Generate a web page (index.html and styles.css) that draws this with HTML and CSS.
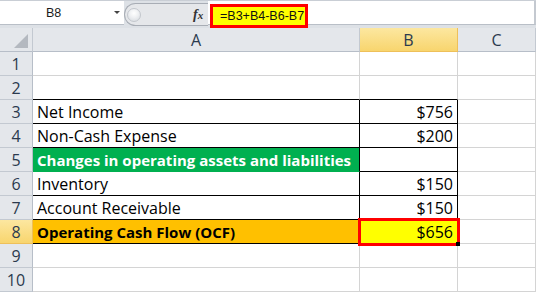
FILE: index.html
```html
<!DOCTYPE html>
<html lang="en">
<head>
  <meta charset="UTF-8">
  <title>Operating Cash Flow</title>
  <link rel="stylesheet" href="styles.css">
</head>
<body>
  <div class="formula-bar">
    <div class="name-box">
      <span class="cell-ref">B8</span>
      <span class="caret"></span>
    </div>
    <div class="fx-pill">
      <span class="knob"></span>
      <span class="fx">f<span class="fx-x">x</span></span>
    </div>
    <div class="formula-input">
      <span class="formula">=B3+B4-B6-B7</span>
    </div>
  </div>

  <div class="sheet">
    <div class="cell corner">
      <svg width="14" height="14" viewBox="0 0 14 14"><polygon points="14,0 14,14 0,14" fill="#b4b9c0"/></svg>
    </div>
    <div class="cell ch">A</div>
    <div class="cell ch active">B</div>
    <div class="cell ch">C</div>

    <div class="cell rh">1</div>
    <div class="cell"></div>
    <div class="cell"></div>
    <div class="cell"></div>

    <div class="cell rh">2</div>
    <div class="cell top-edge"></div>
    <div class="cell top-edge"></div>
    <div class="cell"></div>

    <div class="cell rh">3</div>
    <div class="cell boxed">Net Income</div>
    <div class="cell boxed num">$756</div>
    <div class="cell"></div>

    <div class="cell rh">4</div>
    <div class="cell boxed">Non-Cash Expense</div>
    <div class="cell boxed num">$200</div>
    <div class="cell"></div>

    <div class="cell rh">5</div>
    <div class="cell boxed green">Changes in operating assets and liabilities</div>
    <div class="cell boxed num"></div>
    <div class="cell"></div>

    <div class="cell rh">6</div>
    <div class="cell boxed">Inventory</div>
    <div class="cell boxed num">$150</div>
    <div class="cell"></div>

    <div class="cell rh">7</div>
    <div class="cell boxed">Account Receivable</div>
    <div class="cell boxed num">$150</div>
    <div class="cell"></div>

    <div class="cell rh active">8</div>
    <div class="cell boxed orange">Operating Cash Flow (OCF)</div>
    <div class="cell boxed num selected">$656</div>
    <div class="cell"></div>

    <div class="cell rh">9</div>
    <div class="cell"></div>
    <div class="cell"></div>
    <div class="cell"></div>

    <div class="cell rh">10</div>
    <div class="cell"></div>
    <div class="cell"></div>
    <div class="cell"></div>
  </div>
</body>
</html>
```

FILE: styles.css
```css
:root {
  --grid: #d4d4d4;
  --head-bg: #e4e7eb;
  --head-line: #c3c9d1;
  --head-text: #2b3a4e;
}

html, body {
  margin: 0;
  height: 100%;
  overflow: hidden;
  background: #ffffff;
}

body {
  font-family: "Open Sans", "Noto Sans", sans-serif;
}

/* formula bar */
.formula-bar {
  height: 28px;
  box-sizing: border-box;
  display: flex;
  background: #dde1e6;
  border-top: 1px solid #c9ced5;
}

.name-box {
  width: 124px;
  height: 24px;
  box-sizing: border-box;
  display: flex;
  align-items: center;
  background: #ffffff;
  border-bottom: 1px solid #b9bfc7;
  font-family: "Liberation Sans", Arial, sans-serif;
  font-size: 12.5px;
  color: #1b1b1b;
}

.cell-ref {
  margin-left: 46px;
}

.caret {
  margin-left: 53px;
  width: 0;
  height: 0;
  border-left: 3px solid transparent;
  border-right: 3px solid transparent;
  border-top: 3px solid #444;
}

.fx-pill {
  width: 84px;
  height: 23px;
  margin-top: 2px;
  box-sizing: border-box;
  display: flex;
  align-items: center;
  background: #e5e7ea;
  border: 1px solid #a8adb5;
  border-right: none;
  border-radius: 12px 0 0 12px;
}

.knob {
  width: 12px;
  height: 12px;
  margin-left: 2px;
  border-radius: 50%;
  background: radial-gradient(circle at 50% 35%, #ffffff 0, #eef0f2 45%, #d3d7dc 100%);
  border: 1px solid #c3c7cd;
}

.fx {
  margin-left: 52px;
  font-family: "Liberation Serif", "Times New Roman", serif;
  font-style: italic;
  font-weight: bold;
  font-size: 14px;
  color: #333;
}

.fx-x {
  font-size: 11px;
}

.formula-input {
  flex: 1;
  height: 24px;
  box-sizing: border-box;
  background: #ffffff;
  border-bottom: 1px solid #b9bfc7;
  border-right: 2px solid #c4c9d0;
}

.formula {
  display: inline-flex;
  align-items: center;
  box-sizing: border-box;
  width: 98px;
  height: 24px;
  margin-top: 3px;
  margin-left: 2px;
  padding-left: 7px;
  background: #ffff00;
  border: 3px solid #ff0000;
  font-family: "Liberation Sans", Arial, sans-serif;
  font-size: 12.5px;
  color: #111;
}

/* sheet grid */
.sheet {
  display: grid;
  grid-template-columns: 33px 327px 98px 78px;
  grid-auto-rows: 24px;
}

.cell {
  box-sizing: border-box;
  display: flex;
  align-items: center;
  padding: 0 4px;
  border-right: 1px solid var(--grid);
  border-bottom: 1px solid var(--grid);
  font-size: 16px;
  color: #000;
  white-space: nowrap;
  overflow: hidden;
}

.corner {
  justify-content: flex-end;
  align-items: flex-end;
  padding: 0 4px 3px 0;
  background: var(--head-bg);
  border-right-color: var(--head-line);
  border-bottom-color: #b7bec8;
}

.ch,
.rh {
  justify-content: center;
  padding: 0;
  background: var(--head-bg);
  color: var(--head-text);
  border-right-color: var(--head-line);
  border-bottom-color: var(--head-line);
}

.ch {
  border-bottom-color: #b7bec8;
}

.rh {
  border-right-color: #b7bec8;
}

.ch.active,
.rh.active {
  background: linear-gradient(#fce7a0, #f8d56e);
  border-right-color: #eec05a;
  border-bottom-color: #eec05a;
}

.top-edge {
  border-bottom-color: #000;
}

.boxed {
  border-right-color: #000;
  border-bottom-color: #000;
}

.num {
  justify-content: flex-end;
  padding-right: 4px;
}

.green {
  background: #00b050;
  color: #ffffff;
  font-weight: bold;
  font-size: 15px;
  border-bottom-color: #00b050;
}

.orange {
  background: #ffc000;
  font-weight: bold;
  font-size: 15px;
}

.selected {
  position: relative;
  z-index: 1;
  overflow: visible;
  background: #ffff00;
  outline: 3px solid #ff0000;
  outline-offset: -1px;
}

.selected::after {
  content: "";
  position: absolute;
  right: -3px;
  bottom: -3px;
  width: 4px;
  height: 4px;
  background: #000;
}
```
